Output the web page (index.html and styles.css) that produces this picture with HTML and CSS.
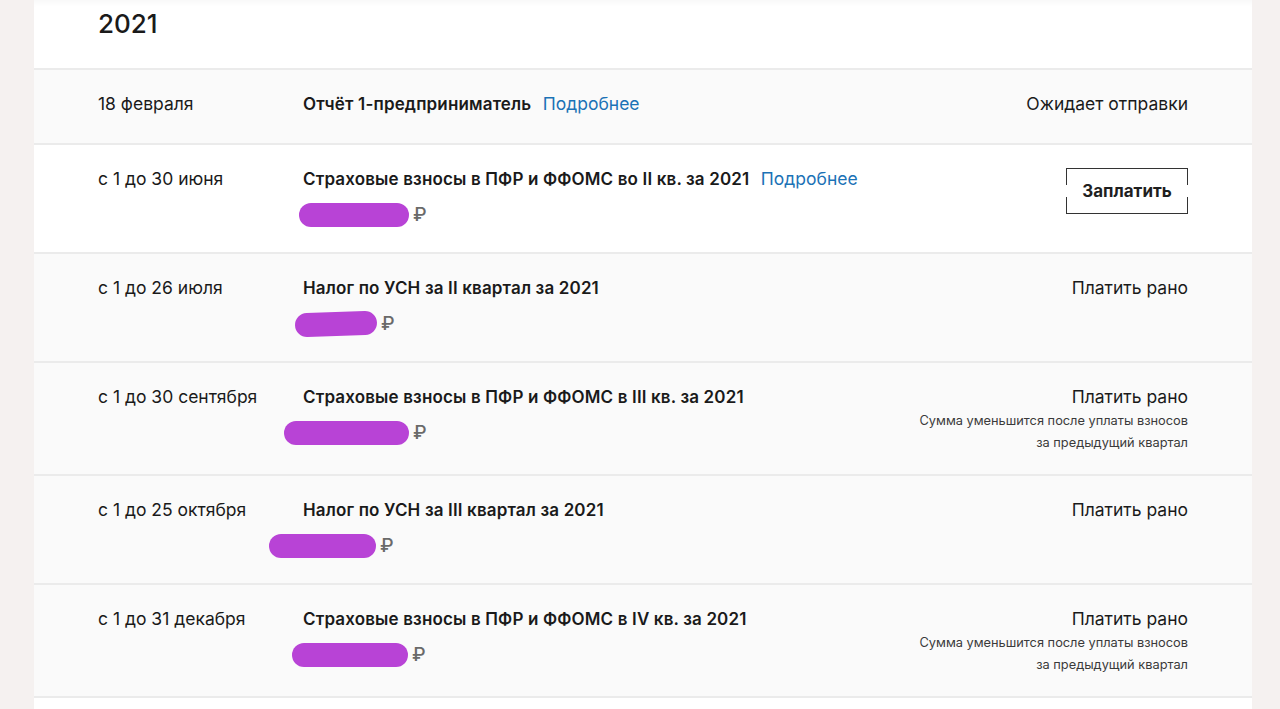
FILE: index.html
```html
<!DOCTYPE html>
<html>
<head>
    <meta charset="utf-8">
    <title>Календарь 2021</title>
    <link rel="stylesheet" href="styles.css">
</head>
<body>
<div class="page">
    <div class="card">
        <h2 class="year">2021</h2>
        <div class="row gray first">
            <div class="date">18 февраля</div>
            <div class="main">
                <div class="title">Отчёт 1-предприниматель <a class="more" href="#">Подробнее</a></div>
            </div>
            <div class="status">Ожидает отправки</div>
        </div>
        <div class="row">
            <div class="date">с 1 до 30 июня</div>
            <div class="main">
                <div class="title">Страховые взносы в ПФР и ФФОМС во II кв. за 2021 <a class="more" href="#">Подробнее</a></div>
                <div class="sum"><span class="mask m1"></span><span class="rub">₽</span></div>
            </div>
            <div class="status"><button class="pay">Заплатить</button></div>
        </div>
        <div class="row gray">
            <div class="date">с 1 до 26 июля</div>
            <div class="main">
                <div class="title">Налог по УСН за II квартал за 2021</div>
                <div class="sum"><span class="mask m2"></span><span class="rub">₽</span></div>
            </div>
            <div class="status">Платить рано</div>
        </div>
        <div class="row gray">
            <div class="date">с 1 до 30 сентября</div>
            <div class="main">
                <div class="title">Страховые взносы в ПФР и ФФОМС в III кв. за 2021</div>
                <div class="sum"><span class="mask m3"></span><span class="rub">₽</span></div>
            </div>
            <div class="status">Платить рано
                <div class="note">Сумма уменьшится после уплаты взносов<br>за предыдущий квартал</div>
            </div>
        </div>
        <div class="row gray">
            <div class="date">с 1 до 25 октября</div>
            <div class="main">
                <div class="title">Налог по УСН за III квартал за 2021</div>
                <div class="sum"><span class="mask m4"></span><span class="rub">₽</span></div>
            </div>
            <div class="status">Платить рано</div>
        </div>
        <div class="row gray">
            <div class="date">с 1 до 31 декабря</div>
            <div class="main">
                <div class="title">Страховые взносы в ПФР и ФФОМС в IV кв. за 2021</div>
                <div class="sum"><span class="mask m5"></span><span class="rub">₽</span></div>
            </div>
            <div class="status">Платить рано
                <div class="note">Сумма уменьшится после уплаты взносов<br>за предыдущий квартал</div>
            </div>
        </div>
        <div class="tail"></div>
    </div>
</div>
</body>
</html>
```

FILE: styles.css
```css
html, body {
    margin: 0;
    padding: 0;
    background: #f5f1f0;
}
body {
    font-family: Inter, "Noto Sans", sans-serif;
    color: #1a1a1a;
    font-size: 17.5px;
}
.page {
    padding: 0 28px 0 34px;
}
.card {
    background: #fff;
    box-shadow: inset 0 8px 8px -8px rgba(0, 0, 0, 0.06);
}
.year {
    margin: 0;
    padding: 8px 64px 0;
    height: 60px;
    font-size: 26px;
    line-height: 32px;
    font-weight: 500;
    border-bottom: 2px solid #ebebeb;
}
.row {
    display: grid;
    grid-template-columns: 205px 1fr auto;
    padding: 24px 64px 25px;
    border-bottom: 2px solid #ebebeb;
    line-height: 20px;
}
.row.first {
    padding: 24px 64px 29px;
}
.gray {
    background: #fafafa;
}
.title {
    font-weight: 600;
    font-size: 17px;
    letter-spacing: 0.15px;
}
.more {
    margin-left: 7px;
    color: #1b72b6;
    font-weight: 400;
    font-size: 17.5px;
    letter-spacing: 0;
    text-decoration: none;
}
.sum {
    display: flex;
    align-items: center;
    margin-top: 14px;
    height: 24px;
}
.mask {
    display: block;
    height: 24px;
    border-radius: 12px;
    background: #b843d6;
}
.m1 { width: 110px; margin-left: -4px; }
.m2 { width: 82px; margin-left: -8px; transform: rotate(-2deg); }
.m3 { width: 125px; margin-left: -19px; }
.m4 { width: 107px; margin-left: -34px; }
.m5 { width: 116px; margin-left: -11px; }
.rub {
    margin-left: 4px;
    color: #6a6a6a;
    font-size: 19px;
    font-weight: 500;
}
.status {
    text-align: right;
}
.note {
    margin: 3px 0 -5px;
    font-size: 12.8px;
    line-height: 22px;
    color: #3a3a3a;
}
.pay {
    position: relative;
    margin-top: -1px;
    width: 122px;
    height: 46px;
    border: 1px solid #333;
    background: #fff;
    font-family: inherit;
    font-size: 17px;
    font-weight: 700;
    color: #1f1f1f;
}
.pay::before,
.pay::after {
    content: "";
    position: absolute;
    top: 16px;
    width: 3px;
    height: 12px;
    background: #fff;
}
.pay::before { left: -2px; }
.pay::after { right: -2px; }
.tail {
    height: 12px;
}
```
